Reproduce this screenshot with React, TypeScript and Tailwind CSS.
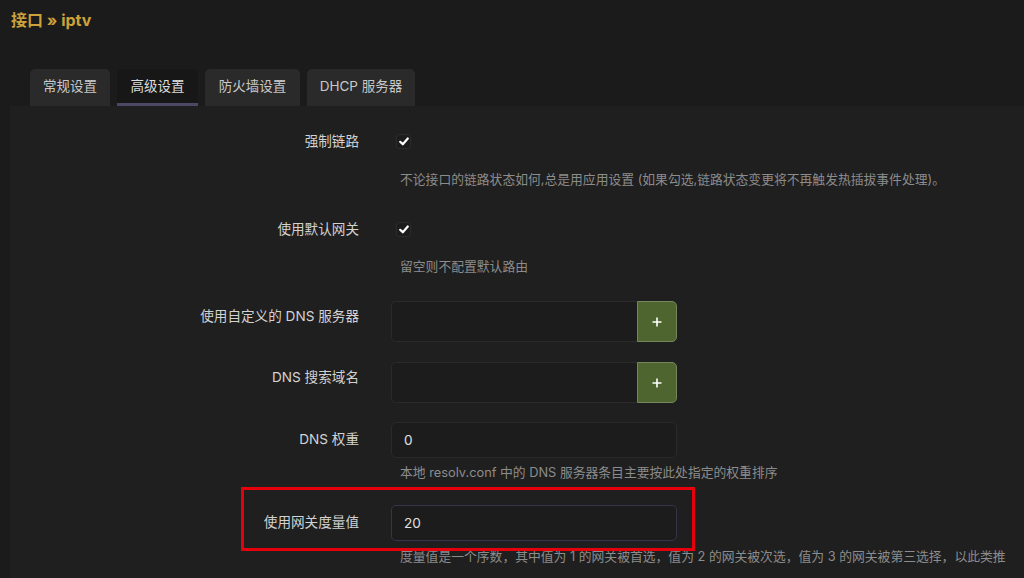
import React from "react";

const font = { fontFamily: '"Inter", "Noto Sans CJK SC", sans-serif' };

function Check() {
  return (
    <div className="ml-[5px] flex h-[15px] w-[15px] items-center justify-center rounded-[3px] border border-[#2b2b2b] bg-[#1c1c1c]">
      <svg width="10" height="9" viewBox="0 0 10 9">
        <path d="M1.2 4.8 L3.8 7.3 L8.8 1.5" fill="none" stroke="#fff" strokeWidth="2.2" strokeLinecap="round" strokeLinejoin="round" />
      </svg>
    </div>
  );
}

function Label({ children, className = "" }: { children: React.ReactNode; className?: string }) {
  return (
    <div className={`w-[349px] shrink-0 text-right text-[13.6px] leading-[20px] text-[#d2d2d2] ${className}`}>
      {children}
    </div>
  );
}

function Desc({ children, className = "" }: { children: React.ReactNode; className?: string }) {
  return <div className={`pl-[390px] text-[12.8px] leading-[18px] text-[#8c8c8c] ${className}`}>{children}</div>;
}

function ListInput() {
  return (
    <div className="ml-[32px] flex h-[41px] w-[286px]">
      <div className="flex-1 rounded-l-[5px] border border-r-0 border-[#2a2a2a] bg-[#1c1c1c]" />
      <button className="flex w-[40px] items-center justify-center rounded-r-[5px] border border-[#75855c] bg-[#4e6530]">
        <svg width="10" height="10" viewBox="0 0 10 10">
          <path d="M5 0.5 V9.5 M0.5 5 H9.5" stroke="#fff" strokeWidth="1.6" />
        </svg>
      </button>
    </div>
  );
}

function TextInput({ value, focus = false }: { value: string; focus?: boolean }) {
  return (
    <div
      className={`ml-[32px] flex h-[36px] w-[286px] items-center rounded-[5px] border bg-[#1c1c1c] pl-[12px] text-[13.6px] text-[#e0e0e0] ${
        focus ? "border-[#36344a]" : "border-[#2a2a2a]"
      }`}
    >
      {value}
    </div>
  );
}

export default function App() {
  const tabs = [
    { name: "常规设置", w: "w-[80px]" },
    { name: "高级设置", w: "w-[81px]", active: true },
    { name: "防火墙设置", w: "w-[95px]" },
    { name: "DHCP 服务器", w: "w-[108px]" },
  ];

  return (
    <div className="h-[578px] w-[1024px] overflow-hidden bg-[#1b1b1b]" style={font}>
      <div className="pl-[11px] pt-[10px] text-[16px] font-bold leading-[20px] text-[#cda23a]">接口 » iptv</div>

      <div className="mt-[39px] flex gap-[7px] pl-[30px]">
        {tabs.map((t) => (
          <div
            key={t.name}
            className={`flex h-[37px] items-center justify-center rounded-t-[5px] text-[13.5px] ${t.w} ${
              t.active
                ? "border-b-[3px] border-[#4d4866] bg-[#171717] pt-[1px] text-[#dcdcdc]"
                : "bg-[#2a2a2a] pb-[2px] text-[#c8c8c8]"
            }`}
          >
            {t.name}
          </div>
        ))}
      </div>

      <div className="ml-[10px] h-[472px] bg-[#1f1f1f] pt-[25px]">
        <div className="flex h-[20px] items-center">
          <Label>强制链路</Label>
          <div className="ml-[32px]">
            <Check />
          </div>
        </div>
        <Desc className="mt-[20px]">不论接口的链路状态如何,总是用应用设置 (如果勾选,链路状态变更将不再触发热插拔事件处理)。</Desc>

        <div className="mt-[30px] flex h-[20px] items-center">
          <Label>使用默认网关</Label>
          <div className="ml-[32px]">
            <Check />
          </div>
        </div>
        <Desc className="mt-[19px]">留空则不配置默认路由</Desc>

        <div className="mt-[25px] flex items-start">
          <Label className="mt-[5px]">使用自定义的 DNS 服务器</Label>
          <ListInput />
        </div>

        <div className="mt-[20px] flex items-start">
          <Label className="mt-[5px]">DNS 搜索域名</Label>
          <ListInput />
        </div>

        <div className="mt-[19px] flex items-start">
          <Label className="mt-[7px]">DNS 权重</Label>
          <TextInput value="0" />
        </div>
        <Desc className="mt-[6px]">本地 resolv.conf 中的 DNS 服务器条目主要按此处指定的权重排序</Desc>

        <div className="relative mt-[23px] flex items-start">
          <Label className="mt-[7px]">使用网关度量值</Label>
          <TextInput value="20" focus />
          <div className="pointer-events-none absolute left-[231px] top-[-18px] h-[64px] w-[454px] border-[3px] border-[#e5000b]" />
        </div>
        <Desc className="mt-[7px]">
          度量值是一个序数，其中值为 1 的网关被首选，值为 2 的网关被次选，值为 3 的网关被第三选择，以此类推
        </Desc>
      </div>
    </div>
  );
}
